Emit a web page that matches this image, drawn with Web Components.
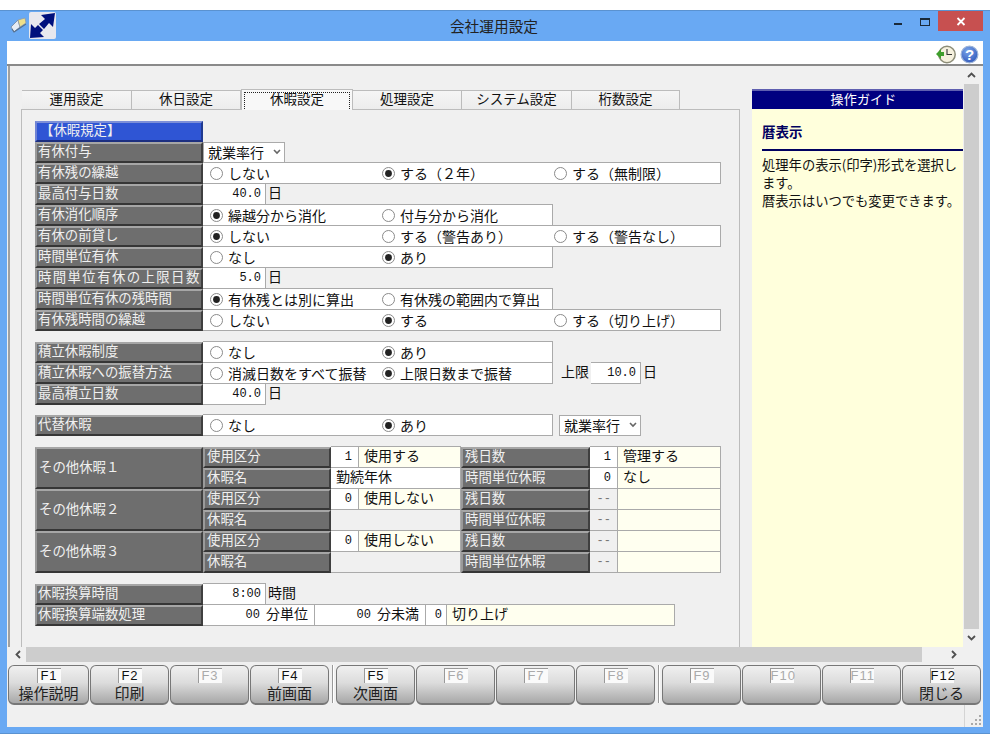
<!DOCTYPE html>
<html lang="ja">
<head>
<meta charset="utf-8">
<title>会社運用設定</title>
<style>
  html, body { margin: 0; background: #fff; overflow: hidden; }
  body { font: 14px "Liberation Mono", "Noto Sans CJK JP", monospace; color: #111; }
  .gap10 { display: block; height: 10px; }
  .gap11 { display: block; height: 11px; }
</style>
</head>
<body>
<app-window>
  <title-bar slot="title">会社運用設定</title-bar>
  <tool-bar slot="tools"></tool-bar>
  <scroll-view slot="main">
    <setting-pane>
      <tab-strip slot="tabs" items="運用設定,休日設定,休暇設定,処理設定,システム設定,桁数設定" active="2"></tab-strip>

      <form-row label="【休暇規定】" blue></form-row>
      <form-row label="有休付与"><select-box>就業率行</select-box></form-row>
      <form-row label="有休残の繰越"><radio-box span="3"><radio-opt>しない</radio-opt><radio-opt checked>する（２年）</radio-opt><radio-opt>する（無制限）</radio-opt></radio-box></form-row>
      <form-row label="最高付与日数"><num-box>40.0</num-box><plain-text>日</plain-text></form-row>
      <form-row label="有休消化順序"><radio-box span="2"><radio-opt checked>繰越分から消化</radio-opt><radio-opt>付与分から消化</radio-opt></radio-box></form-row>
      <form-row label="有休の前貸し"><radio-box span="3"><radio-opt checked>しない</radio-opt><radio-opt>する（警告あり）</radio-opt><radio-opt>する（警告なし）</radio-opt></radio-box></form-row>
      <form-row label="時間単位有休"><radio-box span="2"><radio-opt>なし</radio-opt><radio-opt checked>あり</radio-opt></radio-box></form-row>
      <form-row label="時間単位有休の上限日数" spread="1.4"><num-box>5.0</num-box><plain-text>日</plain-text></form-row>
      <form-row label="時間単位有休の残時間"><radio-box span="2"><radio-opt checked>有休残とは別に算出</radio-opt><radio-opt>有休残の範囲内で算出</radio-opt></radio-box></form-row>
      <form-row label="有休残時間の繰越"><radio-box span="3"><radio-opt>しない</radio-opt><radio-opt checked>する</radio-opt><radio-opt>する（切り上げ）</radio-opt></radio-box></form-row>

      <span class="gap11"></span>
      <form-row label="積立休暇制度"><radio-box span="2"><radio-opt>なし</radio-opt><radio-opt checked>あり</radio-opt></radio-box></form-row>
      <form-row label="積立休暇への振替方法"><radio-box span="2"><radio-opt>消滅日数をすべて振替</radio-opt><radio-opt checked>上限日数まで振替</radio-opt></radio-box><plain-text style="margin-left:6px;width:30px">上限</plain-text><num-box w="50" pad="5">10.0</num-box><plain-text>日</plain-text></form-row>
      <form-row label="最高積立日数"><num-box>40.0</num-box><plain-text>日</plain-text></form-row>

      <span class="gap10"></span>
      <form-row label="代替休暇"><radio-box span="2"><radio-opt>なし</radio-opt><radio-opt checked>あり</radio-opt></radio-box><select-box style="margin-left:6px;width:82px">就業率行</select-box></form-row>

      <span class="gap11"></span>
      <other-leave>
        <other-group label="その他休暇１" use-no="1" use-text="使用する" name="勤続年休" rest-no="1" rest-text="管理する" hour-no="0" hour-text="なし"></other-group>
        <other-group label="その他休暇２" use-no="0" use-text="使用しない" name="" rest-no="--" rest-text="" hour-no="--" hour-text=""></other-group>
        <other-group label="その他休暇３" use-no="0" use-text="使用しない" name="" rest-no="--" rest-text="" hour-no="--" hour-text=""></other-group>
      </other-leave>

      <span class="gap11"></span>
      <form-row label="休暇換算時間"><num-box>8:00</num-box><plain-text>時間</plain-text></form-row>
      <form-row label="休暇換算端数処理">
        <num-box w="112" pad="55" unit="分単位">00</num-box>
        <num-box w="111" pad="55" unit="分未満">00</num-box>
        <num-box w="21" pad="5">0</num-box>
        <note-box>切り上げ</note-box>
      </form-row>
    </setting-pane>
    <guide-pane slot="side" heading="暦表示">処理年の表示(印字)形式を選択し<br>ます。<br>暦表示はいつでも変更できます。</guide-pane>
  </scroll-view>
  <key-bar slot="keys">
    <fn-key code="F1" style="width:81px">操作説明</fn-key>
    <fn-key code="F2">印刷</fn-key>
    <fn-key code="F3" off></fn-key>
    <fn-key code="F4">前画面</fn-key>
    <i class="sep"></i>
    <fn-key code="F5">次画面</fn-key>
    <fn-key code="F6" off></fn-key>
    <fn-key code="F7" off></fn-key>
    <fn-key code="F8" off></fn-key>
    <i class="sep"></i>
    <fn-key code="F9" off></fn-key>
    <fn-key code="F10" off></fn-key>
    <fn-key code="F11" off></fn-key>
    <fn-key code="F12">閉じる</fn-key>
  </key-bar>
  <status-bar slot="status"></status-bar>
</app-window>

<script>
// small helper, every element just gets an open shadow root with its own style + markup
class Base extends HTMLElement {
  render(css, html) {
    const shadow = this.attachShadow({ mode: 'open' });
    shadow.innerHTML = `<style>${css}</style>${html}`;
    return shadow;
  }
}

const bevel = `
  box-sizing: border-box;
  border-style: solid;
  border-width: 2px;
  border-color: #a6a6a6 #3f3f3f #363636 #9a9a9a;
  background: #6e6e6e;
  color: #f0f0f0;
  font-size: 13.4px;
  white-space: nowrap;
  overflow: hidden;
`;

class AppWindow extends Base {
  connectedCallback() {
    this.render(`
      :host { display: flex; flex-direction: column; box-sizing: border-box; width: 990px; height: 724px;
        margin-top: 10px; background: #69a9f3; border: solid #5a92d0; border-width: 1px 0 1px 0; padding: 0 7px 6px 7px; }
      .client { flex: 1; display: flex; flex-direction: column; min-height: 0; background: #f0f0f0; }
    `, `
      <slot name="title"></slot>
      <div class="client">
        <slot name="tools"></slot>
        <slot name="main"></slot>
        <slot name="keys"></slot>
        <slot name="status"></slot>
      </div>
    `);
  }
}

class TitleBar extends Base {
  connectedCallback() {
    this.render(`
      :host { display: flex; align-items: flex-start; height: 30px; margin: 0 0 0 -7px; color: #222; }
      .book { margin: 6px 0 0 10px; flex: none; }
      .tile { width: 27px; height: 27px; margin: 1px 0 0 2px; background: #e8e8ee; border-radius: 2px; flex: none; }
      .name { flex: 1; text-align: center; font: 14.7px "Noto Sans CJK JP", sans-serif; line-height: 30px; padding-left: 38px; }
      .ctl { display: flex; align-items: flex-start; }
      .min { width: 8px; height: 2px; background: #1a2a3a; margin: 12px 18px 0 0; }
      .max { width: 8px; height: 5px; border: 1px solid #1a2a3a; border-top-width: 2px; margin: 7px 8px 0 0; }
      .close { width: 45px; height: 20px; background: #c75050; color: #fff; display: flex; align-items: center; justify-content: center; }
    `, `
      <svg class="book" width="17" height="16" viewBox="0 0 17 16">
        <path d="M1 10 L8 3 L10 10 L4 15 Z" fill="#e6ecf4" stroke="#7f93ad"/>
        <path d="M8 3 L15 1 L16 6 L10 10 Z" fill="#efe08a" stroke="#8f9aa8" stroke-width=".8"/>
        <path d="M2 12 L4 15 L10 11 L16 7" fill="none" stroke="#55708f" stroke-width="1.1"/>
      </svg>
      <svg class="tile" viewBox="0 0 27 27">
        <path d="M26 1 L12 3 L16 7 L10 12 L15 17 L20 11 L24 15 Z" fill="#00107c"/>
        <path d="M1 26 L2 12 L6 16 L9 13 L14 18 L11 21 L15 25 Z" fill="#00107c"/>
      </svg>
      <div class="name"><slot></slot></div>
      <div class="ctl">
        <div class="min"></div>
        <div class="max"></div>
        <div class="close"><svg width="10" height="9" viewBox="0 0 10 9"><path d="M1.5 1 L8.5 8 M8.5 1 L1.5 8" stroke="#fff" stroke-width="1.8"/></svg></div>
      </div>
    `);
  }
}

class ToolBar extends Base {
  connectedCallback() {
    this.render(`
      :host { display: flex; justify-content: flex-end; align-items: center; gap: 4px; box-sizing: border-box; height: 25px;
        background: #fff; border-bottom: 2px solid #8a8a8a; padding: 3px 4px 0 0; }
      svg { display: block; }
    `, `
      <svg width="20" height="19" viewBox="0 0 20 19">
        <circle cx="11" cy="9.5" r="8.2" fill="#f6f1de" stroke="#8d8d78" stroke-width="1.5"/>
        <path d="M11 4 V9.5 H16" fill="none" stroke="#333" stroke-width="1.1"/>
        <path d="M0 9 L5 4 V7 H8 V11 H5 V14 Z" fill="#3f9e2c"/>
      </svg>
      <svg width="19" height="19" viewBox="0 0 19 19">
        <defs><radialGradient id="h" cx=".4" cy=".3" r=".8"><stop offset="0" stop-color="#7aa6ea"/><stop offset="1" stop-color="#2b52b8"/></radialGradient></defs>
        <circle cx="9.5" cy="9.5" r="8.4" fill="url(#h)" stroke="#9db4d8" stroke-width="1.2"/>
        <text x="9.5" y="15" text-anchor="middle" font-family="Liberation Sans" font-weight="700" font-size="15" fill="#fff">?</text>
      </svg>
    `);
  }
}

class ScrollView extends Base {
  connectedCallback() {
    this.render(`
      :host { display: flex; flex-direction: column; flex: none; height: 596px; overflow: hidden; }
      .top { display: flex; height: 581px; border-left: 2px solid #a0a0a0; margin-left: 1px; }
      .view { display: flex; width: 953px; overflow: hidden; padding: 23px 0 0 11px; box-sizing: border-box; gap: 12px; }
      .v { width: 15px; display: flex; flex-direction: column; background: #f0f0f0; margin-left: 1px; }
      .v .thumb { flex: 1; background: #cdcdcd; }
      .arrow { height: 18px; display: flex; align-items: center; justify-content: center; flex: none; }
      .h { display: flex; height: 15px; margin-left: 3px; width: 970px; }
      .h .arrow { width: 16px; height: 15px; }
      .h .thumb { width: 896px; background: #cdcdcd; }
      .h .rest { flex: 1; display: flex; justify-content: flex-end; }
      path { fill: none; stroke: #505050; stroke-width: 1.8; }
    `, `
      <div class="top">
        <div class="view"><slot></slot><slot name="side"></slot></div>
        <div class="v">
          <div class="arrow"><svg width="9" height="6"><path d="M1 5 L4.5 1.5 L8 5"/></svg></div>
          <div class="thumb"></div>
          <div class="arrow"><svg width="9" height="6"><path d="M1 1 L4.5 4.5 L8 1"/></svg></div>
        </div>
      </div>
      <div class="h">
        <div class="arrow"><svg width="6" height="9"><path d="M5 1 L1.5 4.5 L5 8"/></svg></div>
        <div class="thumb"></div>
        <div class="rest"><div class="arrow" style="margin-right:18px"><svg width="6" height="9"><path d="M1 1 L4.5 4.5 L1 8"/></svg></div></div>
      </div>
    `);
  }
}

class SettingPane extends Base {
  connectedCallback() {
    this.render(`
      :host { display: block; width: 719px; flex: none; }
      .body { border: 1px solid #bcbcbc; border-bottom: 0; height: 560px; box-sizing: border-box; padding: 11px 0 0 13px; }
    `, `
      <slot name="tabs"></slot>
      <div class="body"><slot></slot></div>
    `);
  }
}

class TabStrip extends Base {
  connectedCallback() {
    const items = this.getAttribute('items').split(',');
    const active = Number(this.getAttribute('active'));
    const widths = [110, 109, 112, 109, 110, 108];
    const tabs = items.map((t, i) =>
      `<div class="tab ${i === active ? 'on' : ''}" style="width:${widths[i]}px"><span>${t}</span></div>`).join('');
    this.render(`
      :host { display: flex; align-items: flex-end; height: 20px; padding-left: 1px; position: relative; z-index: 1; }
      .tab { box-sizing: border-box; height: 19px; border: 1px solid #bcbcbc; border-bottom: 0; border-left-width: 0; text-align: center;
        background: linear-gradient(#f5f5f5, #ececec); font-size: 13.5px; line-height: 19px; overflow: hidden; }
      .tab:first-child { border-left-width: 1px; }
      .on { height: 21px; margin-bottom: -1px; background: #f8f8f8; border-left-width: 1px; padding: 2px 2px 0; }
      .on span { display: block; height: 17px; border: 1px dotted #222; line-height: 15px; }
    `, tabs);
  }
}

class FormRow extends Base {
  connectedCallback() {
    const blue = this.hasAttribute('blue');
    const spread = this.getAttribute('spread') || 0;
    this.render(`
      :host { display: flex; height: 21px; }
      .lab { ${bevel} width: 168px; flex: none; line-height: 18px; padding-left: 1px; letter-spacing: ${spread}px; ${blue ? 'background:#2f55d4;border-color:#7c8fd8 #203a90 #1c2f80 #6f83d4;padding-left:3px;' : ''} }
    `, `<div class="lab">${this.getAttribute('label')}</div><slot></slot>`);
  }
}

class RadioBox extends Base {
  connectedCallback() {
    const w = this.getAttribute('span') === '3' ? 518 : 350;
    this.render(`
      :host { display: flex; box-sizing: border-box; width: ${w}px; height: 21px; background: #fff;
        box-shadow: inset -1px -1px 0 #aaa, 0 -1px 0 #aaa; }
    `, `<slot></slot>`);
  }
}

class RadioOpt extends Base {
  connectedCallback() {
    const on = this.hasAttribute('checked');
    this.render(`
      :host { display: flex; align-items: center; width: 172px; flex: none; padding-left: 7px; box-sizing: border-box; height: 20px; white-space: nowrap; font-size: 14px; }
      svg { margin-right: 5px; flex: none; }
    `, `
      <svg width="13" height="13" viewBox="0 0 13 13">
        <circle cx="6.5" cy="6.5" r="6" fill="#fff" stroke="#8a8a8a"/>
        ${on ? '<circle cx="6.5" cy="6.5" r="3.4" fill="#222"/>' : ''}
      </svg><slot></slot>
    `);
  }
}

class NumBox extends Base {
  connectedCallback() {
    const w = this.getAttribute('w') || 63;
    const pad = this.getAttribute('pad') || 5;
    const unit = this.getAttribute('unit');
    this.render(`
      :host { display: flex; box-sizing: border-box; width: ${w}px; height: 21px; background: #fff; flex: none;
        box-shadow: inset -1px -1px 0 #aaa, 0 -1px 0 #aaa; font-size: 12px; line-height: 20px; }
      .n { ${unit ? `width:${w - pad}px;` : 'flex:1;'} text-align: right; padding-right: ${unit ? 0 : pad}px; box-sizing: border-box; }
      .u { font-size: 14px; margin-left: 6px; white-space: nowrap; }
    `, unit
      ? `<div class="n" style="width:${w - pad}px"><slot></slot></div><div class="u">${unit}</div>`
      : `<div class="n"><slot></slot></div>`);
  }
}

class PlainText extends Base {
  connectedCallback() {
    this.render(`:host { display: block; flex: none; font-size: 14px; line-height: 20px; padding-left: 2px; white-space: nowrap; }`, `<slot></slot>`);
  }
}

class NoteBox extends Base {
  connectedCallback() {
    this.render(`
      :host { display: block; box-sizing: border-box; width: 228px; height: 21px; background: #ffffef; padding-left: 5px;
        box-shadow: inset -1px -1px 0 #aaa, 0 -1px 0 #aaa; font-size: 14px; line-height: 20px; white-space: nowrap; flex: none; }
    `, `<slot></slot>`);
  }
}

class SelectBox extends Base {
  connectedCallback() {
    this.render(`
      :host { display: flex; align-items: center; box-sizing: border-box; width: 82px; height: 21px; background: #fff; flex: none;
        border: 1px solid #aaa; padding: 0 0 1px 4px; font-size: 14px; white-space: nowrap; gap: 9px; }
    `, `<slot></slot><svg width="8" height="6"><path d="M1 1 L4 4 L7 1" fill="none" stroke="#666" stroke-width="1.6"/></svg>`);
  }
}

class OtherLeave extends Base {
  connectedCallback() {
    this.render(`:host { display: block; width: 686px; }`, `<slot></slot>`);
  }
}

class OtherGroup extends Base {
  connectedCallback() {
    const a = n => this.getAttribute(n);
    const sub = t => `<div class="sub">${t}</div>`;
    const num = t => `<div class="num ${t === '--' ? 'dash' : ''}">${t}</div>`;
    const note = t => `<div class="note">${t}</div>`;
    const hasName = a('name') !== '';
    this.render(`
      :host { display: grid; grid-template-columns: 168px 128px 28px 102px 129px 28px 103px; grid-template-rows: 21px 21px; }
      .big { ${bevel} grid-row: span 2; line-height: 39px; padding-left: 2px; }
      .sub { ${bevel} line-height: 18px; padding-left: 2px; }
      .num, .note, .name { box-sizing: border-box; box-shadow: inset -1px -1px 0 #aaa, 0 -1px 0 #aaa; line-height: 20px; white-space: nowrap; }
      .num { background: #fff; text-align: right; padding-right: 7px; font-size: 12px; }
      .num.dash { background: #f0f0f0; color: #777; }
      .note { background: #fffff0; padding-left: 5px; font-size: 14px; }
      .name { grid-column: span 2; padding-left: 5px; font-size: 14px; background: ${hasName ? '#fff' : '#f0f0f0'}; }
    `, `
      <div class="big">${a('label')}</div>
      ${sub('使用区分')}${num(a('use-no'))}${note(a('use-text'))}
      ${sub('残日数')}${num(a('rest-no'))}${note(a('rest-text'))}
      ${sub('休暇名')}<div class="name">${a('name')}</div>
      ${sub('時間単位休暇')}${num(a('hour-no'))}${note(a('hour-text'))}
    `);
  }
}

class GuidePane extends Base {
  connectedCallback() {
    this.render(`
      :host { display: block; width: 211px; flex: none; height: 558px; overflow: hidden; background: #ffffdc; font-family: "Noto Sans CJK JP", sans-serif; }
      .head { height: 20px; box-sizing: border-box; background: #000080; border-top: 2px solid #5f5fb0; color: #fff; text-align: center; font-size: 13px; line-height: 15px; padding-left: 12px; letter-spacing: .2px; }
      .ttl { margin: 13px 0 0 10px; height: 27px; border-bottom: 2px solid #000060; color: #000060; font-weight: 700; font-size: 13.5px; line-height: 19px; }
      .txt { margin: 5px 0 0 10px; font-size: 13.3px; line-height: 18px; white-space: nowrap; }
    `, `
      <div class="head">操作ガイド</div>
      <div class="ttl">${this.getAttribute('heading')}</div>
      <div class="txt"><slot></slot></div>
    `);
  }
}

class KeyBar extends Base {
  connectedCallback() {
    this.render(`
      :host { display: flex; height: 40px; margin-top: 3px; padding-left: 1px; gap: 1px; }
      ::slotted(i) { display: block; width: 1px; height: 38px; margin: 0 1px 0 2px; background: #999; border-right: 1px solid #fff; box-sizing: content-box; }
    `, `<slot></slot>`);
  }
}

class FnKey extends Base {
  connectedCallback() {
    const off = this.hasAttribute('off');
    this.render(`
      :host { display: block; box-sizing: border-box; width: 79px; height: 40px; flex: none; border: 1px solid #777; border-bottom-width: 2px; border-radius: 6px;
        background: linear-gradient(#f0f0f0 0%, #dcdcdc 45%, #a8a8a8 100%); text-align: center; font-family: "Noto Sans CJK JP", sans-serif; }
      .code { box-sizing: border-box; display: block; width: 24px; height: 15px; margin: 2px auto 0; background: #fafafa;
        border-top: 1px solid #999; border-left: 1px solid #999; font: 13px/14px "Liberation Sans", sans-serif; letter-spacing: 1px; color: ${off ? '#aaa' : '#111'}; }
      .txt { display: block; font-size: 15px; line-height: 19px; height: 19px; color: #222; white-space: nowrap; }
    `, `<span class="code">${this.getAttribute('code')}</span><span class="txt"><slot></slot></span>`);
  }
}

class StatusBar extends Base {
  connectedCallback() {
    this.render(`
      :host { display: flex; justify-content: flex-end; flex: 1; background: #f0f0f0; }
      .grip { width: 18px; border-left: 1px solid #d4d4d4; position: relative; }
      svg { position: absolute; right: 2px; bottom: 2px; }
    `, `<div class="grip"><svg width="10" height="10" fill="#a9a9a9">
      <rect x="8" y="0" width="2" height="2"/><rect x="4" y="4" width="2" height="2"/><rect x="8" y="4" width="2" height="2"/>
      <rect x="0" y="8" width="2" height="2"/><rect x="4" y="8" width="2" height="2"/><rect x="8" y="8" width="2" height="2"/>
    </svg></div>`);
  }
}

const parts = {
  'app-window': AppWindow, 'title-bar': TitleBar, 'tool-bar': ToolBar, 'scroll-view': ScrollView,
  'setting-pane': SettingPane, 'tab-strip': TabStrip, 'form-row': FormRow, 'radio-box': RadioBox,
  'radio-opt': RadioOpt, 'num-box': NumBox, 'plain-text': PlainText, 'note-box': NoteBox,
  'select-box': SelectBox, 'other-leave': OtherLeave, 'other-group': OtherGroup, 'guide-pane': GuidePane,
  'key-bar': KeyBar, 'fn-key': FnKey, 'status-bar': StatusBar
};
for (const name in parts) customElements.define(name, parts[name]);
</script>
</body>
</html>
